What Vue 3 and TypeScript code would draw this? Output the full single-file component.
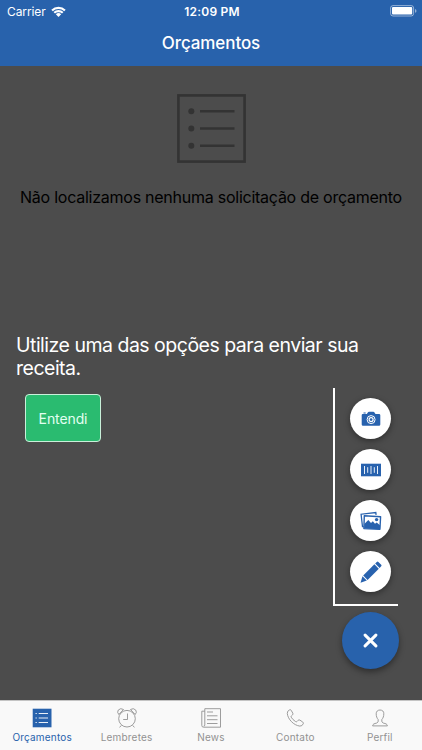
<script setup lang="ts">
import { ref } from 'vue'

type TabId = 'orcamentos' | 'lembretes' | 'news' | 'contato' | 'perfil'

const tabs: { id: TabId; label: string }[] = [
  { id: 'orcamentos', label: 'Orçamentos' },
  { id: 'lembretes', label: 'Lembretes' },
  { id: 'news', label: 'News' },
  { id: 'contato', label: 'Contato' },
  { id: 'perfil', label: 'Perfil' },
]

const active = ref<TabId>('orcamentos')
</script>

<template>
  <div class="screen">
    <header class="header">
      <div class="status">
        <div class="carrier">
          <span class="carrier-name">Carrier</span>
          <svg class="wifi" viewBox="0 0 15 11">
            <path d="M.3 3.700a10.200 10.200 0 0 1 14.400 0l-1.500 1.600a8.100 8.100 0 0 0-11.400 0z" />
            <path d="M2.500 6a7 7 0 0 1 10 0L11 7.600a5 5 0 0 0-7 0z" />
            <path d="M4.800 8.300a3.800 3.800 0 0 1 5.400 0L7.500 11z" />
          </svg>
        </div>
        <span class="time">12:09 PM</span>
        <div class="battery-wrap">
          <svg class="battery" viewBox="0 0 27 12">
            <rect x=".6" y=".6" width="23" height="10.4" rx="2.4" fill="none" stroke="#fff" stroke-opacity=".5" />
            <rect x="2" y="2" width="20.2" height="7.6" rx="1" fill="#fff" />
            <path d="M25 4v3.8q1.500-.5 1.500-1.900T25 4z" fill="#fff" fill-opacity=".5" />
          </svg>
        </div>
      </div>
      <h1 class="title">Orçamentos</h1>
    </header>

    <main class="content">
      <section class="empty">
        <svg class="empty-icon" viewBox="0 0 69 69" fill="none" stroke="#333" stroke-width="2.6">
          <rect x="1.4" y="1.4" width="66.2" height="66.2" />
          <path d="M23 17.300h34.500M23 34.500h34.500M23 51.700h34.500" />
          <g fill="#333" stroke="none">
            <circle cx="14.3" cy="17.3" r="3" />
            <circle cx="14.3" cy="34.5" r="3" />
            <circle cx="14.3" cy="51.7" r="3" />
          </g>
        </svg>
        <p class="empty-text">Não localizamos nenhuma solicitação de orçamento</p>
      </section>

      <p class="hint">Utilize uma das opções para enviar sua receita.</p>

      <section class="actions">
        <button class="confirm" type="button">Entendi</button>
        <div class="fab-area">
          <div class="options">
            <button class="option" type="button" aria-label="Câmera">
              <svg viewBox="0 0 20 20">
                <path fill="#2862ae" d="M1.800 5h4l1.200-1.800q.3-.5.9-.5h4.500q.6 0 .9.5L14.500 5h3.500q1.300 0 1.300 1.300v9.200q0 1.300-1.300 1.300H2Q.7 16.800.7 15.500V6.300Q.7 5 1.800 5zM2.500 3.400h2.200v1H2.500z" />
                <circle cx="10.100" cy="10.600" r="4" fill="none" stroke="#fff" stroke-width="1" />
                <circle cx="10.100" cy="10.600" r="2" fill="none" stroke="#fff" stroke-width="1.200" />
              </svg>
            </button>
            <button class="option" type="button" aria-label="Código de barras">
              <svg viewBox="0 0 20 20">
                <path fill="#2862ae" d="M0 3.700h20v12.600H0z" />
                <path fill="none" stroke="#fff" stroke-width=".9" d="M3.500 6v8M6.700 7.200v5.600M10 6v8M13.300 7.200v5.600M16.500 6v8" />
              </svg>
            </button>
            <button class="option" type="button" aria-label="Galeria">
              <svg class="gallery" viewBox="0 0 22 20">
                <path fill="none" stroke="#2862ae" stroke-width="1.300" d="M3.700 15.700H2.500L1.100 3.200l14.700-1.700.3 2.400" />
                <path fill="none" stroke="#2862ae" stroke-width="1.400" stroke-linejoin="round" d="m4.300 4.800 16.300.9-.7 12.600-16-.7z" />
                <path fill="#2862ae" d="m4.300 13.100 4-4.100 2.700 2.900 1.800-1.600 2.200 2.500 1.700-1.400 3.500 3.200-.2 3.700-15.900-.7z" />
                <circle cx="16.600" cy="8.600" r="1.700" fill="#2862ae" />
              </svg>
            </button>
            <button class="option" type="button" aria-label="Escrever">
              <svg class="pencil" viewBox="0 0 22 22" fill="#2862ae">
                <path d="m15.200 2.500 1.600-1.600q.8-.8 1.600 0l2.800 2.800q.8.800 0 1.600l-1.600 1.600z" />
                <path d="m14.400 3.300 4.400 4.400L7.600 18.900l-4.400-4.400z" />
                <path d="m2.500 15.300 4.300 4.300-6.300 2.100z" />
              </svg>
            </button>
          </div>
          <button class="fab" type="button" aria-label="Fechar">
            <svg viewBox="0 0 15 15" fill="none" stroke="#fff" stroke-width="3" stroke-linecap="round">
              <path d="m2.100 2.100 10.800 10.800M12.900 2.100 2.100 12.900" />
            </svg>
          </button>
        </div>
      </section>
    </main>

    <nav class="tabs">
      <button
        v-for="tab in tabs"
        :key="tab.id"
        type="button"
        class="tab"
        :class="{ active: tab.id === active }"
        @click="active = tab.id"
      >
        <svg class="tab-icon" viewBox="0 0 20 20" fill="none" stroke="currentColor" stroke-width=".9">
          <g v-if="tab.id === 'orcamentos'">
            <path fill="currentColor" stroke="none" d="M.7.7h18.800v18.600H.7z" />
            <path stroke="#fff" d="M6.700 5.500H16M6.700 10H16M6.700 14.500H16M3.500 5.500h1.300M3.500 10h1.300M3.500 14.500h1.300" />
          </g>
          <g v-else-if="tab.id === 'lembretes'">
            <circle cx="10" cy="10.700" r="8.300" />
            <path d="M10.500 5.500v6H6.200M4.300 17.400l-1.700 2M15.700 17.400l1.700 2" />
            <path d="M1.800 6.500Q-.3 4.300 1.300 2q2.300-2.400 5.200-.5zM18.200 6.500q2.100-2.200.5-4.500-2.300-2.400-5.200-.5z" />
          </g>
          <g v-else-if="tab.id === 'news'">
            <path d="M3.800.7h15.700v18.500H2.600Q.8 19.200.8 17.400V3.200h3M3.800.7v16.200q0 1.300-1.200 1.300M6 4h6M6 7.800h10.500M6 11.700h10.500M6 15.500h10.500" />
          </g>
          <path
            v-else-if="tab.id === 'contato'"
            d="M4.700 1.800Q2 2.900 2.300 5.500c.5 5.600 6.300 11.800 12.500 12.600q2.400.2 3.500-2.400.3-1-.5-1.600l-2.900-2q-1-.6-1.800.2l-1.200 1.300q-.6.500-1.300 0-3-1.900-4.400-4.400-.4-.7.200-1.300l1.200-1.100q.7-.7.200-1.600L6.200 2.300q-.5-.8-1.500-.5z"
          />
          <path
            v-else
            d="M10 2C7.600 2 6.200 3.500 6.200 5.800c0 2.500.7 4.300 2 5.800q.5 2.800-1.400 3.400c-2.800.8-3.900.9-4.200 2.900h14.800c-.3-2-1.400-2.100-4.200-2.900q-1.900-.6-1.400-3.400c1.300-1.500 2-3.300 2-5.800C14 3.500 12.400 2 10 2z"
          />
        </svg>
        <span class="tab-label">{{ tab.label }}</span>
      </button>
    </nav>
  </div>
</template>

<style>
body {
  margin: 0;
}
</style>

<style scoped>
.screen {
  display: flex;
  flex-direction: column;
  width: 422px;
  height: 750px;
  overflow: hidden;
  background: #4c4c4c;
  font-family: Inter, 'Liberation Sans', sans-serif;
}
button {
  margin: 0;
  padding: 0;
  border: 0;
  font: inherit;
}
p,
h1 {
  margin: 0;
}
svg {
  display: block;
}
.header {
  height: 66px;
  flex: none;
  background: #2862ac;
  color: #fff;
}
.status {
  display: grid;
  grid-template-columns: 1fr auto 1fr;
  align-items: center;
  height: 22px;
  padding: 0 5px 0 7px;
  font-size: 12px;
}
.carrier {
  display: flex;
  align-items: center;
  gap: 5px;
}
.carrier-name {
  letter-spacing: -0.1px;
}
.wifi {
  width: 15px;
  height: 11px;
  fill: #fff;
}
.time {
  font-weight: 600;
  letter-spacing: 0.2px;
}
.battery-wrap {
  display: flex;
  justify-content: flex-end;
}
.battery {
  width: 27px;
  height: 12px;
}
.title {
  text-align: center;
  font-size: 17px;
  font-weight: 500;
  line-height: 42px;
  letter-spacing: -0.1px;
}
.content {
  flex: 1;
  display: flex;
  flex-direction: column;
}
.empty {
  display: flex;
  flex-direction: column;
  align-items: center;
  height: 268px;
  padding-top: 28px;
  box-sizing: border-box;
}
.empty-icon {
  width: 69px;
  height: 69px;
}
.empty-text {
  margin-top: 24px;
  font-size: 16px;
  line-height: 20px;
  letter-spacing: -0.25px;
  color: #000;
  white-space: nowrap;
}
.hint {
  width: 370px;
  height: 45px;
  margin-left: 16px;
  font-size: 19.5px;
  line-height: 23px;
  letter-spacing: -0.5px;
  color: #fff;
}
.actions {
  display: flex;
  justify-content: space-between;
  align-items: flex-start;
  padding: 9px 23px 0 25px;
}
.confirm {
  width: 76px;
  height: 48px;
  margin-top: 6px;
  border: 1px solid #c9f0da;
  border-radius: 4px;
  background: #2abb70;
  color: #e2fff0;
  font-size: 14px;
  letter-spacing: -0.1px;
}
.fab-area {
  display: flex;
  flex-direction: column;
  align-items: flex-start;
}
.options {
  display: flex;
  flex-direction: column;
  gap: 10px;
  width: 65px;
  height: 218px;
  padding: 10px 0 0 15px;
  box-sizing: border-box;
  border-left: 2px solid #fff;
  border-bottom: 2px solid #fff;
}
.option {
  display: flex;
  align-items: center;
  justify-content: center;
  width: 41px;
  height: 41px;
  border-radius: 50%;
  background: #fff;
  box-shadow: 0 2px 6px rgba(0, 0, 0, 0.4);
}
.option svg {
  width: 20px;
  height: 20px;
}
.option .gallery,
.option .pencil {
  width: 22px;
}
.option .pencil {
  height: 22px;
}
.fab {
  display: flex;
  align-items: center;
  justify-content: center;
  width: 57px;
  height: 57px;
  margin: 6px 0 0 9px;
  border-radius: 50%;
  background: #2862ac;
  box-shadow: 0 3px 6px rgba(0, 0, 0, 0.4);
}
.fab svg {
  width: 15px;
  height: 15px;
}
.tabs {
  display: grid;
  grid-template-columns: repeat(5, 1fr);
  height: 50px;
  flex: none;
  box-sizing: border-box;
  border-top: 1px solid #c4c4c4;
  background: #f9f9f9;
}
.tab {
  display: flex;
  flex-direction: column;
  align-items: center;
  padding-top: 7px;
  background: none;
  color: #929292;
}
.tab.active {
  color: #2862ac;
}
.tab-icon {
  width: 20px;
  height: 20px;
}
.tab-label {
  margin-top: 2px;
  font-size: 10px;
  line-height: 14px;
  letter-spacing: 0.2px;
}
</style>
